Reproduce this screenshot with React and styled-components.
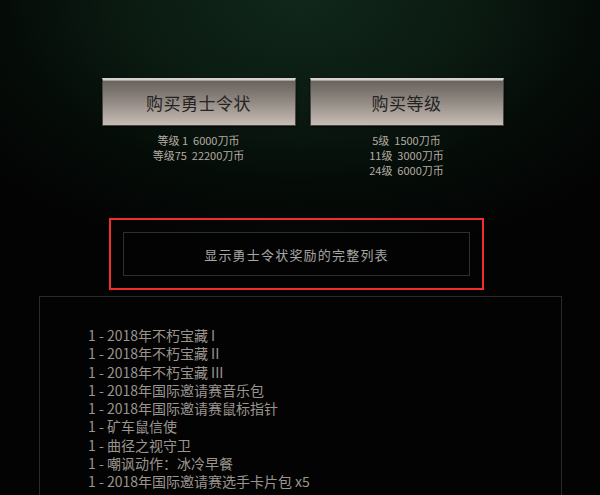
import React from 'react';
import styled, { createGlobalStyle } from 'styled-components';

const GlobalStyle = createGlobalStyle`
  html, body {
    margin: 0;
    padding: 0;
    background: #030303;
  }
  body {
    font-family: "Noto Sans CJK SC", sans-serif;
  }
`;

const Page = styled.div`
  width: 600px;
  height: 495px;
  overflow: hidden;
  background: radial-gradient(ellipse 420px 260px at 50% 0%, #10271b 0%, #0b1b12 40%, #050c08 70%, #030303 100%);
  display: flex;
  flex-direction: column;
  align-items: center;
`;

const BuyRow = styled.div`
  display: flex;
  gap: 14px;
  padding-top: 78px;
  padding-left: 5px;
`;

const BuyColumn = styled.div`
  width: 194px;
  display: flex;
  flex-direction: column;
  align-items: center;
`;

const BuyButton = styled.button`
  width: 194px;
  height: 48px;
  border: 1px solid #4a4643;
  border-top: 2px solid #d6d2ce;
  background: linear-gradient(to bottom, #67615c 0%, #8e8680 45%, #c6beb5 100%);
  box-shadow: inset 0 1px 0 #a8a29c, 0 1px 2px rgba(0, 0, 0, 0.6);
  color: #262423;
  font-family: "Noto Sans CJK SC", sans-serif;
  font-size: 17px;
  letter-spacing: 0.5px;
  cursor: pointer;
  padding: 0;
`;

const PriceList = styled.div`
  margin-top: 7px;
  font-family: "Noto Sans CJK SC", sans-serif;
  font-size: 11px;
  line-height: 15px;
  color: #b5aca2;
  text-align: center;
  white-space: pre;
`;

const Highlight = styled.div`
  margin-top: 40px;
  margin-right: 7px;
  width: 347px;
  padding: 12px;
  border: 2px solid #f02e2e;
`;

const ShowAllButton = styled.div`
  height: 42px;
  border: 1px solid #2f2f2f;
  background: #030303;
  display: flex;
  align-items: center;
  justify-content: center;
  font-family: "Noto Sans CJK SC", sans-serif;
  font-size: 13px;
  color: #a6a6a6;
  letter-spacing: 1.2px;
`;

const RewardBox = styled.ul`
  list-style: none;
  margin: 6px 0 0 1px;
  width: 473px;
  padding: 29px 0 0 48px;
  border: 1px solid #2a2a2a;
  border-bottom: none;
  flex: 1;
  background: #030303;
`;

const RewardItem = styled.li`
  font-family: "Noto Sans CJK SC", sans-serif;
  font-size: 14px;
  line-height: 18.3px;
  color: #9b958f;
  white-space: nowrap;
`;

const buyOptions = [
  { label: '购买勇士令状', prices: ['等级 1  6000刀币', '等级75  22200刀币'] },
  { label: '购买等级', prices: ['5级  1500刀币', '11级  3000刀币', '24级  6000刀币'] },
];

const rewards = [
  '2018年不朽宝藏 I',
  '2018年不朽宝藏 II',
  '2018年不朽宝藏 III',
  '2018年国际邀请赛音乐包',
  '2018年国际邀请赛鼠标指针',
  '矿车鼠信使',
  '曲径之视守卫',
  '嘲讽动作：冰冷早餐',
  '2018年国际邀请赛选手卡片包 x5',
];

export default function App() {
  return (
    <>
      <GlobalStyle />
      <Page>
        <BuyRow>
          {buyOptions.map((opt) => (
            <BuyColumn key={opt.label}>
              <BuyButton>{opt.label}</BuyButton>
              <PriceList>{opt.prices.join('\n')}</PriceList>
            </BuyColumn>
          ))}
        </BuyRow>
        <Highlight>
          <ShowAllButton>显示勇士令状奖励的完整列表</ShowAllButton>
        </Highlight>
        <RewardBox>
          {rewards.map((r) => (
            <RewardItem key={r}>1 - {r}</RewardItem>
          ))}
        </RewardBox>
      </Page>
    </>
  );
}
